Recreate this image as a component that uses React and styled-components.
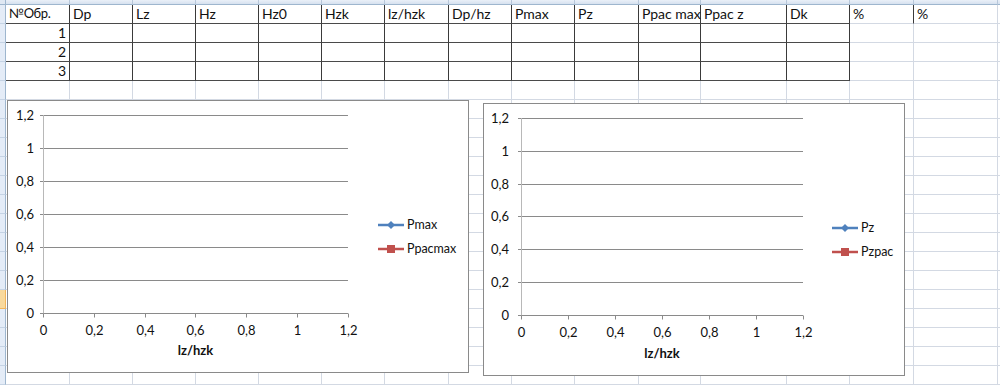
import React from "react";
import styled, { createGlobalStyle } from "styled-components";

const GlobalStyle = createGlobalStyle`
  html, body {
    margin: 0;
    padding: 0;
    background: #ffffff;
  }
  body {
    font-family: "Lato", "Open Sans", "Noto Sans", sans-serif;
    color: #111;
  }
`;

const COLS = [64, 63, 63, 63, 63, 63, 64, 63, 63, 64, 62, 86, 63, 64, 84, 60];
const ROWS = 20;
const SELECTED_ROW = 15;

const HEADERS = [
  "№Обр.", "Dp", "Lz", "Hz", "Hz0", "Hzk", "lz/hzk", "Dp/hz",
  "Pmax", "Pz", "Ppac max", "Ppac z", "Dk", "%", "%",
];

const Page = styled.div`
  position: relative;
  width: 1000px;
  height: 385px;
  overflow: hidden;
  background: #fff;
`;

const Grid = styled.div`
  display: grid;
  grid-template-columns: 6px ${COLS.map((w) => `${w}px`).join(" ")};
  grid-template-rows: 5px repeat(${ROWS}, 19px);
`;

const Corner = styled.div`
  background: #dfe8f3;
  border-right: 1px solid #9eb6ce;
  border-bottom: 1px solid #9eb6ce;
  box-sizing: border-box;
`;

const ColHead = styled.div`
  background: linear-gradient(#eaf0f8, #d6e1ef);
  border-right: 1px solid #b7c7da;
  border-bottom: 1px solid #9eb6ce;
  box-sizing: border-box;
`;

const RowHead = styled.div`
  background: ${(p) => (p.$selected ? "#f9d99c" : "#e4ecf7")};
  border-right: 1px solid ${(p) => (p.$selected ? "#f2b55b" : "#9eb6ce")};
  border-bottom: 1px solid ${(p) => (p.$selected ? "#f2b55b" : "#c5d3e4")};
  box-sizing: border-box;
`;

const Cell = styled.div`
  display: flex;
  align-items: flex-end;
  justify-content: ${(p) => (p.$right ? "flex-end" : "flex-start")};
  padding: 0 3px 1px 3px;
  box-sizing: border-box;
  border-right: 1px solid ${(p) => (p.$darkRight ? "#3a3a3a" : "#d3d9e3")};
  border-bottom: 1px solid ${(p) => (p.$darkBottom ? "#4a4a4a" : "#d3d9e3")};
  font-size: ${(p) => (p.$tight ? "13px" : "14px")};
  line-height: 17px;
  letter-spacing: ${(p) => (p.$tight ? "-0.4px" : "0")};
  white-space: nowrap;
  overflow: visible;
  color: #111;
`;

const ChartBox = styled.div`
  position: absolute;
  left: ${(p) => p.$left}px;
  top: ${(p) => p.$top}px;
  width: ${(p) => p.$width}px;
  height: 273px;
  box-sizing: border-box;
  background: #fff;
  border: 1px solid #8a8a8a;
  display: flex;
  align-items: center;
`;

const Legend = styled.div`
  display: flex;
  flex-direction: column;
  gap: 8px;
  margin-left: ${(p) => p.$gap}px;
`;

const LegendItem = styled.div`
  display: flex;
  align-items: center;
  gap: 3px;
  font-size: 12.5px;
  line-height: 16px;
  color: #111;
`;

const Swatch = styled.svg`
  flex: none;
`;

const Marker = ({ color, shape }) => (
  <Swatch width="26" height="10" viewBox="0 0 26 10">
    <line x1="0" y1="5" x2="26" y2="5" stroke={color} strokeWidth="2.5" />
    {shape === "diamond" ? (
      <polygon points="13,1 17,5 13,9 9,5" fill={color} />
    ) : (
      <rect x="9" y="1" width="8" height="8" fill={color} />
    )}
  </Swatch>
);

const Y_LABELS = ["1,2", "1", "0,8", "0,6", "0,4", "0,2", "0"];
const X_LABELS = ["0", "0,2", "0,4", "0,6", "0,8", "1", "1,2"];

const Plot = ({ w, axisX, top, step, xStep, labelRight, xLabelY, titleY }) => {
  const y0 = top + 6 * step;
  const xEnd = axisX + 6 * xStep;
  const r = (v) => Math.round(v) + 0.5;
  return (
    <svg width={w} height={271} style={{ flex: "none" }}>
      {Y_LABELS.map((lab, i) => {
        const y = r(top + i * step);
        return (
          <g key={lab + i}>
            <line
              x1={axisX - 3}
              x2={xEnd}
              y1={y}
              y2={y}
              stroke="#8a8a8a"
              strokeWidth="1"
            />
            <text
              x={labelRight}
              y={y + 4.5}
              textAnchor="end"
              fontSize="13"
              fontFamily="Lato, 'Open Sans', sans-serif"
              fill="#111"
            >
              {lab}
            </text>
          </g>
        );
      })}
      <line x1={r(axisX)} x2={r(axisX)} y1={top} y2={r(y0)} stroke="#b8b8b8" />
      {X_LABELS.map((lab, i) => {
        const x = r(axisX + i * xStep);
        return (
          <g key={lab + "x" + i}>
            <line x1={x} x2={x} y1={r(y0)} y2={r(y0) + 4} stroke="#8a8a8a" />
            <text
              x={x}
              y={xLabelY + 4.5}
              textAnchor="middle"
              fontSize="13"
              fontFamily="Lato, 'Open Sans', sans-serif"
              fill="#111"
            >
              {lab}
            </text>
          </g>
        );
      })}
      <text
        x={(axisX + xEnd) / 2}
        y={titleY + 4.5}
        textAnchor="middle"
        fontSize="13"
        fontWeight="bold"
        fontFamily="Lato, 'Open Sans', sans-serif"
        fill="#111"
      >
        lz/hzk
      </text>
    </svg>
  );
};

const Chart = ({ left, top, width, plot, legendGap, series }) => (
  <ChartBox $left={left} $top={top} $width={width}>
    <Plot {...plot} />
    <Legend $gap={legendGap}>
      {series.map((s) => (
        <LegendItem key={s.name}>
          <Marker color={s.color} shape={s.shape} />
          {s.name}
        </LegendItem>
      ))}
    </Legend>
  </ChartBox>
);

const BLUE = "#4f81bd";
const RED = "#c0504d";

export default function App() {
  const cells = [];
  cells.push(<Corner key="corner" />);
  COLS.forEach((_, c) => cells.push(<ColHead key={"ch" + c} />));
  for (let r = 0; r < ROWS; r++) {
    cells.push(<RowHead key={"rh" + r} $selected={r === SELECTED_ROW} />);
    COLS.forEach((_, c) => {
      const inTable = r <= 3 && c <= 12;
      let text = "";
      if (r === 0) text = HEADERS[c] || "";
      else if (r <= 3 && c === 0) text = String(r);
      cells.push(
        <Cell
          key={r + "-" + c}
          $darkRight={inTable || (r === 0 && c === 13)}
          $darkBottom={inTable}
          $right={r > 0 && c === 0}
          $tight={r === 0 && c === 0}
        >
          {text}
        </Cell>
      );
    });
  }

  return (
    <>
      <GlobalStyle />
      <Page>
        <Grid>{cells}</Grid>
        <Chart
          left={7}
          top={100}
          width={462}
          legendGap={8}
          plot={{
            w: 362,
            axisX: 35,
            top: 14,
            step: 33,
            xStep: 50.83,
            labelRight: 26,
            xLabelY: 229,
            titleY: 249,
          }}
          series={[
            { name: "Pmax", color: BLUE, shape: "diamond" },
            { name: "Ppacmax", color: RED, shape: "square" },
          ]}
        />
        <Chart
          left={483}
          top={103}
          width={422}
          legendGap={8}
          plot={{
            w: 340,
            axisX: 37,
            top: 14,
            step: 32.83,
            xStep: 47,
            labelRight: 25,
            xLabelY: 228,
            titleY: 249,
          }}
          series={[
            { name: "Pz", color: BLUE, shape: "diamond" },
            { name: "Pzpac", color: RED, shape: "square" },
          ]}
        />
      </Page>
    </>
  );
}
